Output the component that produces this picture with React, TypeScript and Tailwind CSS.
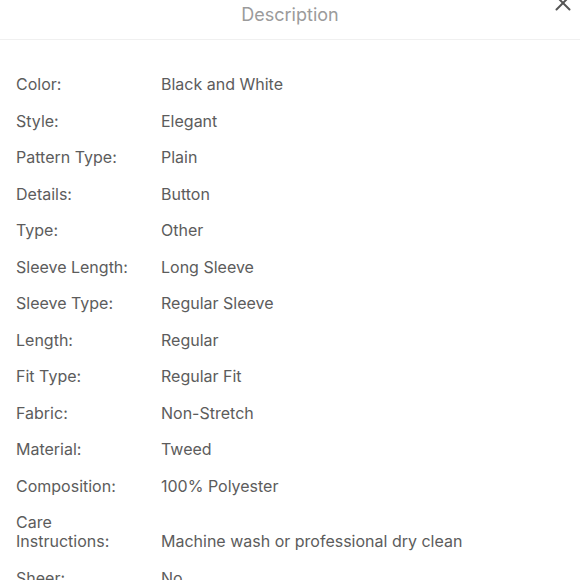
import { X } from "lucide-react";

const specs: [string, string][] = [
  ["Color:", "Black and White"],
  ["Style:", "Elegant"],
  ["Pattern Type:", "Plain"],
  ["Details:", "Button"],
  ["Type:", "Other"],
  ["Sleeve Length:", "Long Sleeve"],
  ["Sleeve Type:", "Regular Sleeve"],
  ["Length:", "Regular"],
  ["Fit Type:", "Regular Fit"],
  ["Fabric:", "Non-Stretch"],
  ["Material:", "Tweed"],
  ["Composition:", "100% Polyester"],
  ["Care Instructions:", "Machine wash or professional dry clean"],
  ["Sheer:", "No"],
];

export default function App() {
  return (
    <div className="h-[580px] w-[580px] overflow-hidden bg-white font-['Inter','Liberation_Sans',sans-serif]">
      <div className="relative flex h-10 items-start justify-center border-b border-[#f0f0f0]">
        <h1 className="mt-[3px] text-[18px] leading-6 text-[#9b9b9b]">Description</h1>
        <button type="button" className="absolute right-1 top-[-10px] text-[#555]">
          <X className="h-[26px] w-[26px]" strokeWidth={1.8} />
        </button>
      </div>
      <div className="flex flex-col gap-[17.5px] px-4 pt-[35px] text-[16px] leading-[19px] text-[#5c5c5c]">
        {specs.map(([label, value]) => (
          <div key={label} className="flex items-end">
            <span className="w-[145px] shrink-0 pr-4">{label}</span>
            <span>{value}</span>
          </div>
        ))}
      </div>
    </div>
  );
}
